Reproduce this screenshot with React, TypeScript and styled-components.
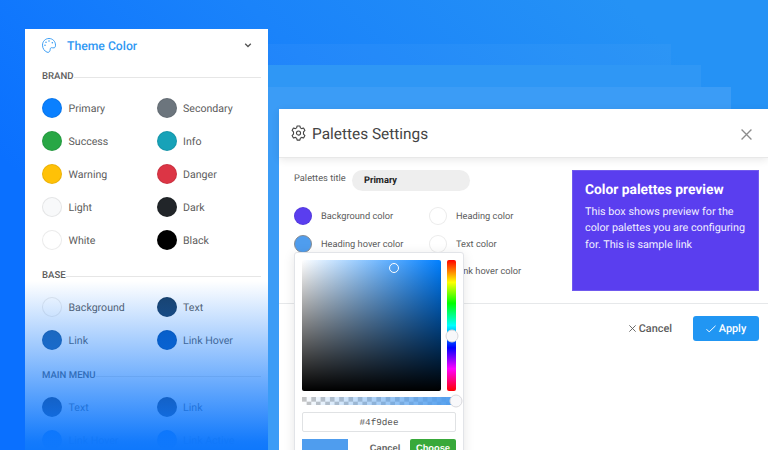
import React from 'react';
import styled, { createGlobalStyle } from 'styled-components';

const GlobalStyle = createGlobalStyle`
  *, *::before, *::after { box-sizing: border-box; }
  body { margin: 0; overflow: hidden; text-rendering: geometricPrecision; }
  button, input { font: inherit; text-rendering: inherit; }
`;

const Stage = styled.div`
  position: relative;
  isolation: isolate;
  display: flex;
  align-items: flex-start;
  gap: 11px;
  width: 768px;
  height: 450px;
  padding-left: 25px;
  overflow: hidden;
  font-family: Roboto, 'Liberation Sans', sans-serif;
  color: #5c5c5c;
  background: linear-gradient(45deg, #0a70ff 24%, #1a83fa 57%, #2592f5 88%);
`;

const Sheet = styled.div<{ $top: number; $right: number; $fill: string }>`
  position: absolute;
  z-index: -1;
  left: 268px;
  bottom: 0;
  top: ${(p) => p.$top}px;
  right: ${(p) => p.$right}px;
  background: ${(p) => p.$fill};
`;

/* Theme colour sidebar */

const Sidebar = styled.aside`
  position: relative;
  flex: none;
  width: 243px;
  height: 421px;
  margin-top: 29px;
  padding: 0 7px 0 17px;
  overflow: hidden;
  background: #fff;
`;

const SidebarFade = styled.div`
  position: absolute;
  inset: 252px 0 0;
  background: linear-gradient(rgba(15, 120, 252, 0), rgba(15, 120, 252, 0.98) 95%, #0f78fc);
`;

const SidebarHeader = styled.header`
  display: flex;
  align-items: center;
  height: 32px;
  padding-right: 9px;
  color: #2f98f3;
`;

const SidebarTitle = styled.h2`
  flex: 1;
  margin: 0 0 0 11px;
  padding-top: 2px;
  font-size: 12.2px;
  font-weight: 500;
  line-height: 15px;
`;

const Section = styled.section`
  & + & { padding-top: 4px; }
`;

const SectionTitle = styled.h3`
  display: flex;
  align-items: center;
  height: 30px;
  margin: 0;
  font-size: 9.6px;
  font-weight: 500;

  &::after {
    content: '';
    flex: 1;
    height: 1px;
    margin-top: 2px;
    background: #e6e6e6;
  }
`;

const SwatchGrid = styled.div`
  display: grid;
  grid-template-columns: 114.5px 1fr;
  grid-auto-rows: 33px;
`;

const SwatchRow = styled.div`
  display: flex;
  align-items: center;
  gap: 6.5px;
  font-size: 10.6px;
`;

const SwatchLabel = styled.span`
  padding-top: 1px;
`;

const Swatch = styled.span<{ $color: string; $size?: number; $ring?: string }>`
  flex: none;
  width: ${(p) => p.$size ?? 20}px;
  height: ${(p) => p.$size ?? 20}px;
  border: 1px solid ${(p) => p.$ring ?? 'rgba(0, 0, 0, 0.08)'};
  border-radius: 50%;
  background: ${(p) => p.$color};
`;

/* Settings dialog */

const Dialog = styled.main`
  flex: 1;
  height: 341px;
  margin-top: 109px;
  background: #fff;
`;

const DialogHeader = styled.header`
  display: flex;
  align-items: center;
  height: 49px;
  padding: 0 16px 0 12px;
  border-bottom: 1px solid #e8e8e8;
  box-shadow: 0 2px 8px rgba(0, 0, 0, 0.09);
  color: #444;
`;

const DialogTitle = styled.h1`
  flex: 1;
  margin: 0 0 0 6px;
  padding-top: 1px;
  font-size: 15.4px;
  font-weight: 400;
`;

const DialogBody = styled.div`
  display: flex;
  justify-content: space-between;
  height: 146px;
  padding: 12px 9px 0 15px;
  border-bottom: 1px solid #e6e8ea;
`;

const Form = styled.div`
  width: 262px;
`;

const TitleField = styled.label`
  display: flex;
  align-items: flex-start;
  justify-content: space-between;
  width: 176px;
  font-size: 9.3px;
  line-height: 18px;
`;

const TitleInput = styled.input`
  width: 118px;
  height: 21px;
  padding: 0 12px;
  border: 0;
  border-radius: 11px;
  background: #eee;
  color: #222;
  font-size: 9.3px;
  font-weight: 700;
`;

const ColorGrid = styled.div`
  position: relative;
  display: grid;
  grid-template-columns: 135px 1fr;
  grid-auto-rows: 27.7px;
  margin-top: 11px;
`;

const ColorField = styled.div`
  display: flex;
  align-items: center;
  gap: 9px;
  font-size: 9.25px;
  white-space: nowrap;
`;

const Preview = styled.section`
  width: 187px;
  height: 121px;
  padding: 11px 12px;
  border: 1px solid #7059ee;
  background: #5a3eef;
  color: #f1eeff;
`;

const PreviewTitle = styled.h2`
  margin: 0;
  color: #fff;
  font-size: 13.8px;
  font-weight: 700;
  line-height: 17px;
`;

const PreviewText = styled.p`
  margin: 5px 0 0;
  font-size: 10.8px;
  line-height: 16.3px;
  white-space: nowrap;
`;

const DialogFooter = styled.footer`
  display: flex;
  align-items: center;
  justify-content: flex-end;
  gap: 21px;
  padding: 12px 9px 0;
`;

const ActionButton = styled.button<{ $primary?: boolean }>`
  display: flex;
  align-items: center;
  justify-content: center;
  gap: 3px;
  width: ${(p) => (p.$primary ? '66px' : 'auto')};
  height: 25px;
  padding: 0;
  border: 0;
  border-radius: 3px;
  background: ${(p) => (p.$primary ? '#2196f3' : 'none')};
  color: ${(p) => (p.$primary ? '#fff' : '#5c5c5c')};
  font-size: 10.9px;
  font-weight: 500;
`;

/* Colour picker popover */

const Popover = styled.div`
  position: absolute;
  top: 50px;
  left: 0;
  width: 170px;
  height: 220px;
  padding: 7px;
  border: 1px solid #e2e4e8;
  border-radius: 3px;
  background: #fff;
  box-shadow: 0 2px 12px rgba(0, 0, 0, 0.1);
`;

const PickerTop = styled.div`
  display: flex;
  justify-content: space-between;
  width: 154px;
  height: 131px;
`;

const Saturation = styled.div`
  position: relative;
  width: 139px;
  border-radius: 2px;
  background:
    linear-gradient(to top, #000, transparent),
    linear-gradient(to right, #fff, #007fff);
`;

const Track = styled.div`
  position: relative;
  width: 9px;
  border-radius: 2px;
  background: linear-gradient(#f00, #ff0 17%, #0f0 33%, #0ff 50%, #00f 67%, #f0f 83%, #f00);
`;

const AlphaTrack = styled.div`
  position: relative;
  width: 154px;
  height: 8px;
  margin-top: 6px;
  background:
    linear-gradient(to right, rgba(79, 157, 238, 0), #4f9dee),
    conic-gradient(#fff 25%, #c4c4c4 0 50%, #fff 0 75%, #c4c4c4 0) 0 0 / 9.3px 9.3px;
`;

const Handle = styled.span<{ $x: number; $y: number; $size: number; $hollow?: boolean }>`
  position: absolute;
  left: ${(p) => p.$x}px;
  top: ${(p) => p.$y}px;
  width: ${(p) => p.$size}px;
  height: ${(p) => p.$size}px;
  transform: translate(-50%, -50%);
  border: 1px solid ${(p) => (p.$hollow ? '#fff' : '#d8d8dc')};
  border-radius: 50%;
  background: ${(p) => (p.$hollow ? 'transparent' : '#f8f8fa')};
`;

const HexInput = styled.input`
  display: block;
  width: 154px;
  height: 20px;
  margin-top: 7px;
  padding: 0;
  border: 1px solid #e0e2e4;
  border-radius: 2px;
  background: #fff;
  color: #555;
  text-align: center;
  font-family: 'Liberation Mono', monospace;
  font-size: 9.3px;
`;

const PickerFooter = styled.div`
  display: flex;
  width: 154px;
  height: 19px;
  margin-top: 7px;
`;

const CurrentColor = styled.span`
  width: 46px;
  background: #4f9dee;
`;

const PickerButton = styled.button<{ $confirm?: boolean }>`
  width: ${(p) => (p.$confirm ? 46 : 62)}px;
  padding: ${(p) => (p.$confirm ? '0 0 1px' : '0 0 1px 12px')};
  border: 0;
  border-radius: 2px;
  background: ${(p) => (p.$confirm ? '#38a93a' : 'none')};
  color: ${(p) => (p.$confirm ? '#fff' : '#666')};
  font-family: 'Liberation Sans', Arial, sans-serif;
  font-size: 9.3px;
  font-weight: 700;
`;

const PaletteIcon = () => (
  <svg width="14" height="15" viewBox="0 0 42 45" fill="none" stroke="currentColor" strokeWidth="2.8">
    <path d="M21 1.500C10 1.500 1.500 10 1.500 21.500c0 10 6 18 13.500 21 4.500 1.800 8-.5 9-5 1-4.500.5-8 4-8.500 3-.4 5 1.500 8.500.5 3-1 4-4 4-8C40.500 10 32 1.500 21 1.500Z" />
    <g fill="currentColor" stroke="none">
      <circle cx="9" cy="22" r="2.300" />
      <circle cx="12" cy="13" r="2.300" />
      <circle cx="21" cy="9" r="2.300" />
      <circle cx="31" cy="14" r="2.300" />
    </g>
  </svg>
);

const GearIcon = () => (
  <svg width="15" height="16" viewBox="0 0 24 25" fill="none" stroke="currentColor" strokeWidth="1.8" strokeLinejoin="round">
    <path d="M9 4.300 9.800 1.200h4.400L15 4.300l2 1.200 3.100-.9 2.200 3.800-2.300 2.200v3.800l2.300 2.200-2.200 3.800-3.100-.9-2 1.200-.8 3.100H9.800L9 20.700l-2-1.200-3.100.9-2.200-3.800L4 14.400v-3.800L1.700 8.400l2.200-3.800 3.100.9Z" />
    <circle cx="12" cy="12.500" r="3.300" />
  </svg>
);

const CrossIcon = ({ size, weight }: { size: number; weight: number }) => (
  <svg width={size} height={size} viewBox="0 0 10 10" fill="none" stroke="currentColor" strokeWidth={weight}>
    <path d="m.5.5 9 9m0-9-9 9" />
  </svg>
);

const CloseButton = styled.button`
  display: flex;
  margin-top: 3px;
  padding: 0;
  border: 0;
  background: none;
  color: #8c8c8c;
`;

const ChevronIcon = () => (
  <svg width="8" height="6" viewBox="0 0 8 6" fill="none" stroke="#555" strokeWidth="1.3">
    <path d="m1.200 1.700 2.800 2.800 2.800-2.800" />
  </svg>
);

const CheckIcon = () => (
  <svg width="10" height="8" viewBox="0 0 10 8" fill="none" stroke="currentColor" strokeWidth="1">
    <path d="m.5 4.200 2.700 2.700L9.500.8" />
  </svg>
);

type Color = [label: string, color: string, ring?: string];

const sections: { title: string; colors: Color[] }[] = [
  {
    title: 'BRAND',
    colors: [
      ['Primary', '#0a80ff'],
      ['Secondary', '#6c757d'],
      ['Success', '#28a745'],
      ['Info', '#17a2b8'],
      ['Warning', '#ffc107'],
      ['Danger', '#dc3545'],
      ['Light', '#f8f9fa'],
      ['Dark', '#212529'],
      ['White', '#fff'],
      ['Black', '#000'],
    ],
  },
  {
    title: 'BASE',
    colors: [
      ['Background', '#fff'],
      ['Text', '#193e64'],
      ['Link', '#2161a7'],
      ['Link Hover', '#0353b4'],
    ],
  },
  {
    title: 'MAIN MENU',
    colors: [
      ['Text', '#1e2a45'],
      ['Link', '#1e2a45'],
      ['Link Hover', '#0070ff'],
      ['Link Active', '#0070ff'],
    ],
  },
];

const paletteColors: Color[] = [
  ['Background color', '#5a3eef'],
  ['Heading color', '#fff'],
  ['Heading hover color', '#4f9dee', '#858b92'],
  ['Text color', '#fff'],
  ['Link color', '#fff'],
  ['Link hover color', '#fff'],
];

export default function App() {
  return (
    <>
      <GlobalStyle />
      <Stage>
        <Sheet $top={44} $right={97} $fill="rgba(255, 255, 255, 0.035)" />
        <Sheet $top={65} $right={67} $fill="#2f97f5" />
        <Sheet $top={87} $right={37} $fill="#3b9cf6" />

        <Sidebar>
          <SidebarHeader>
            <PaletteIcon />
            <SidebarTitle>Theme Color</SidebarTitle>
            <ChevronIcon />
          </SidebarHeader>
          {sections.map((section) => (
            <Section key={section.title}>
              <SectionTitle>{section.title}</SectionTitle>
              <SwatchGrid>
                {section.colors.map(([label, color]) => (
                  <SwatchRow key={label}>
                    <Swatch $color={color} />
                    <SwatchLabel>{label}</SwatchLabel>
                  </SwatchRow>
                ))}
              </SwatchGrid>
            </Section>
          ))}
          <SidebarFade />
        </Sidebar>

        <Dialog>
          <DialogHeader>
            <GearIcon />
            <DialogTitle>Palettes Settings</DialogTitle>
            <CloseButton aria-label="Close">
              <CrossIcon size={11} weight={1.2} />
            </CloseButton>
          </DialogHeader>
          <DialogBody>
            <Form>
              <TitleField>
                Palettes title
                <TitleInput defaultValue="Primary" />
              </TitleField>
              <ColorGrid>
                {paletteColors.map(([label, color, ring]) => (
                  <ColorField key={label}>
                    <Swatch $color={color} $ring={ring} $size={18} />
                    <SwatchLabel>{label}</SwatchLabel>
                  </ColorField>
                ))}
                <Popover>
                  <PickerTop>
                    <Saturation>
                      <Handle $x={92} $y={8} $size={10} $hollow />
                    </Saturation>
                    <Track>
                      <Handle $x={4.5} $y={76} $size={13} />
                    </Track>
                  </PickerTop>
                  <AlphaTrack>
                    <Handle $x={154} $y={4} $size={13} />
                  </AlphaTrack>
                  <HexInput defaultValue="#4f9dee" />
                  <PickerFooter>
                    <CurrentColor />
                    <PickerButton>Cancel</PickerButton>
                    <PickerButton $confirm>Choose</PickerButton>
                  </PickerFooter>
                </Popover>
              </ColorGrid>
            </Form>
            <Preview>
              <PreviewTitle>Color palettes preview</PreviewTitle>
              <PreviewText>
                This box shows preview for the
                <br />
                color palettes you are configuring
                <br />
                for. This is sample link
              </PreviewText>
            </Preview>
          </DialogBody>
          <DialogFooter>
            <ActionButton>
              <CrossIcon size={7} weight={1.3} />
              Cancel
            </ActionButton>
            <ActionButton $primary>
              <CheckIcon />
              Apply
            </ActionButton>
          </DialogFooter>
        </Dialog>
      </Stage>
    </>
  );
}
